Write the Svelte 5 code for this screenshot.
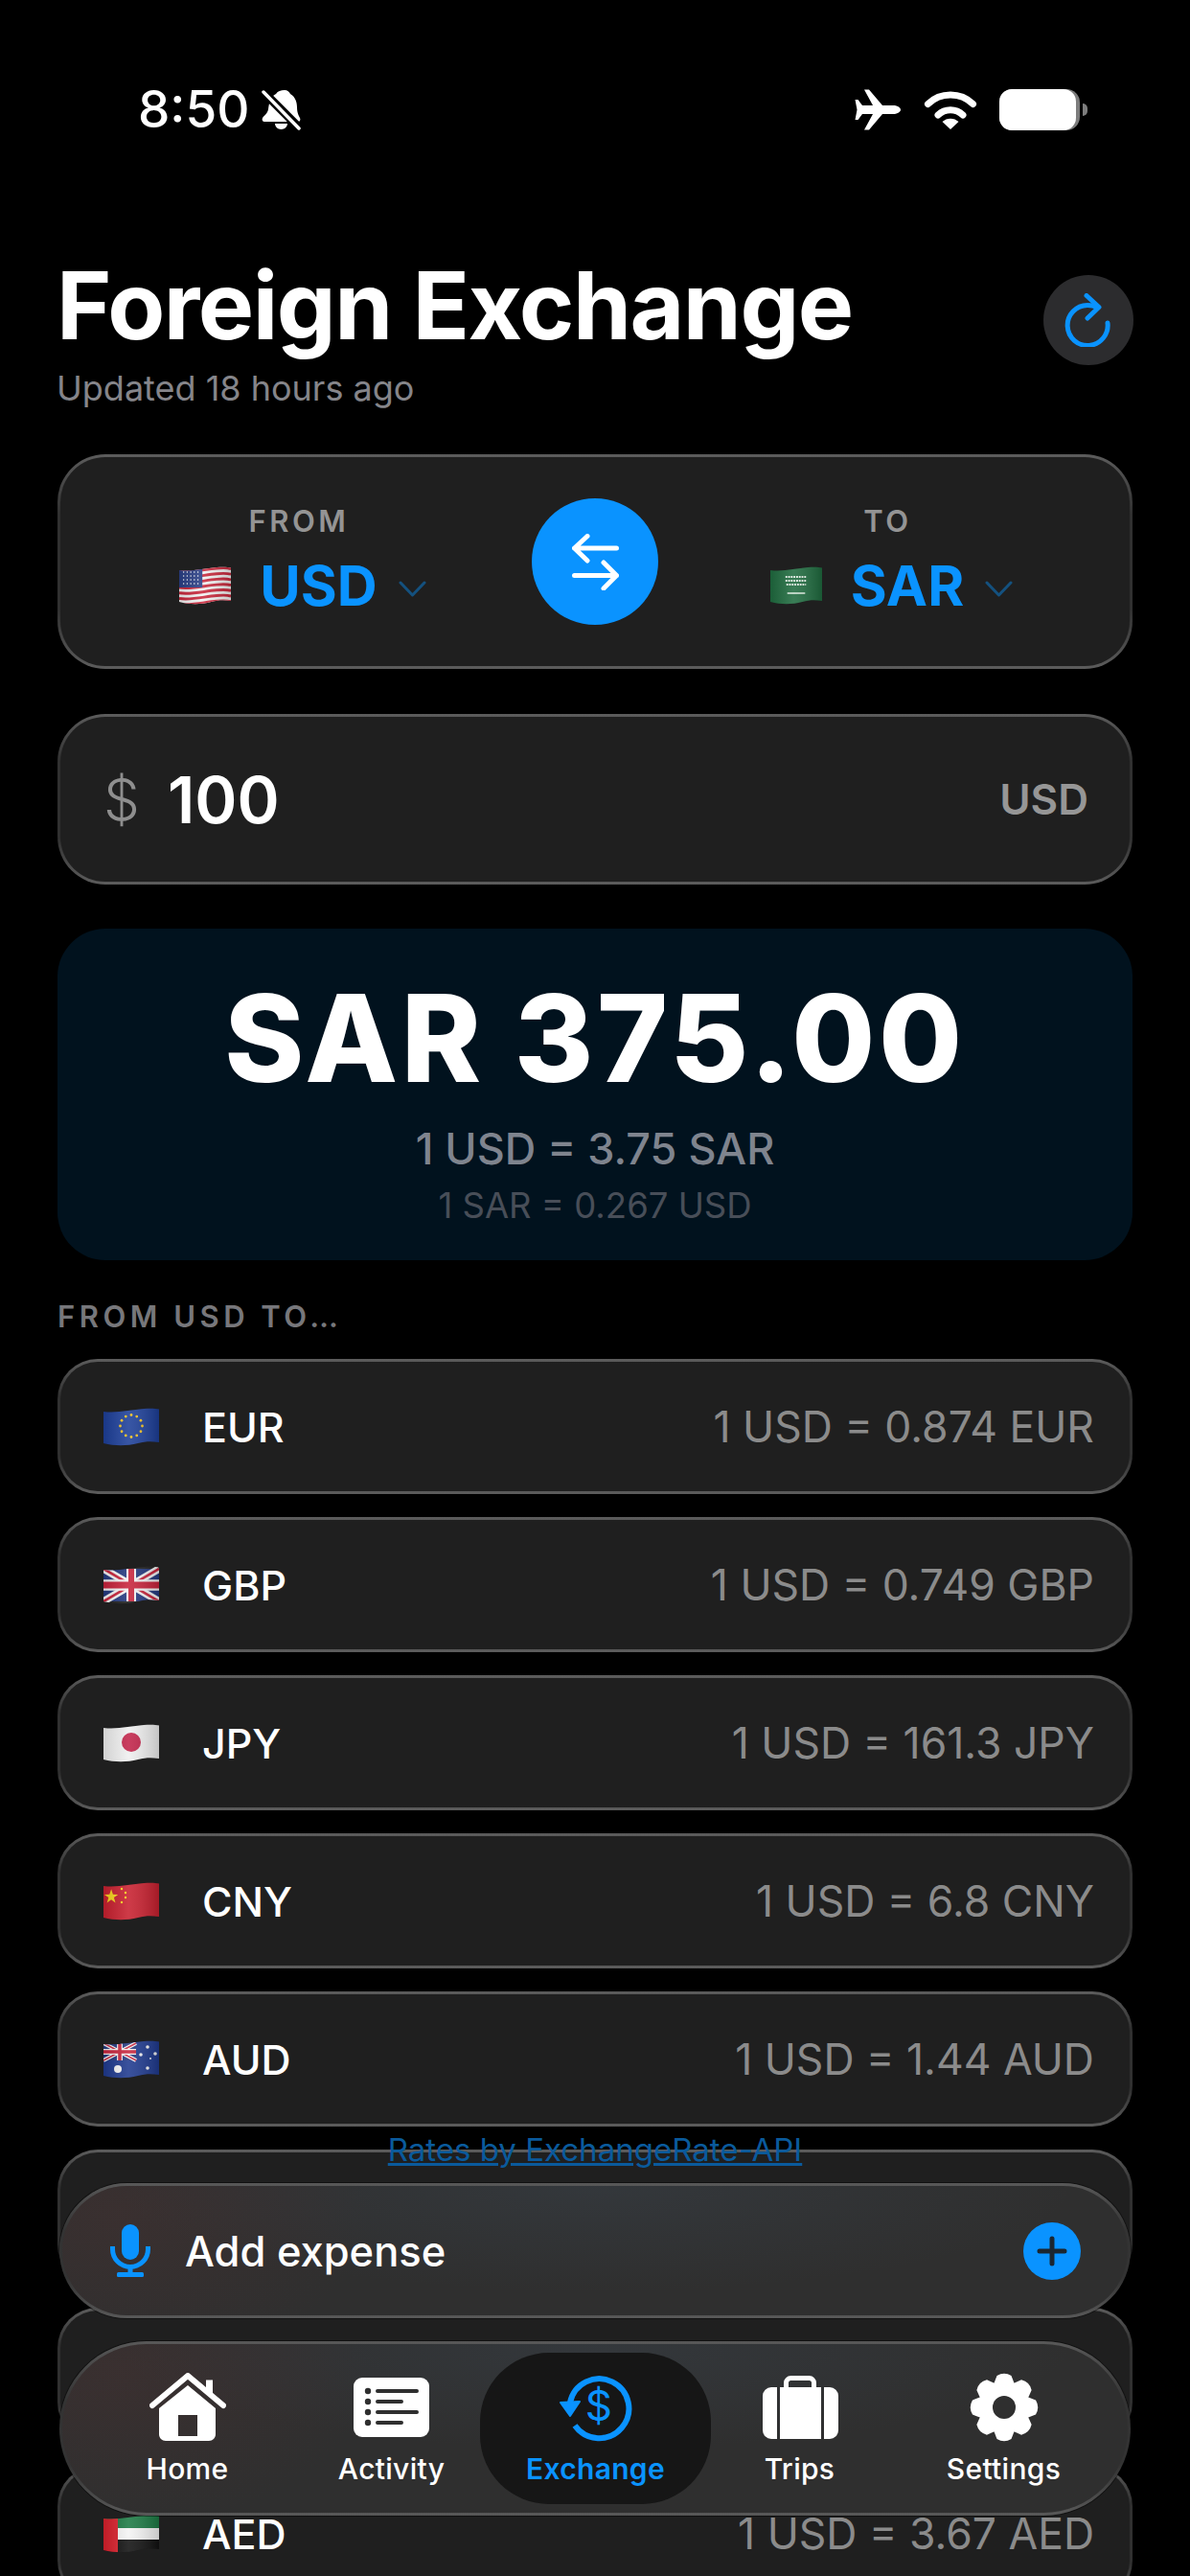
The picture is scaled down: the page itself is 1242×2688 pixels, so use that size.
<script>
  // the two rows behind the floating bars are never visible, so they stay empty
  const rates = [
    { code: 'EUR', rate: '0.874' },
    { code: 'GBP', rate: '0.749' },
    { code: 'JPY', rate: '161.3' },
    { code: 'CNY', rate: '6.8' },
    { code: 'AUD', rate: '1.44' },
    { code: '', rate: '' },
    { code: '', rate: '' },
    { code: 'AED', rate: '3.67' }
  ];

  const waveClip = 'M0 4C14 6 28 2 42 1C48 .5 54 .5 58 1.5V36C50 35 44 35 36 37C24 40 12 40 0 37Z';
  const stars = Array.from({ length: 12 }, (_, i) => ({
    x: 29 + 11.5 * Math.sin((i * Math.PI) / 6),
    y: 19 - 11.5 * Math.cos((i * Math.PI) / 6)
  }));
  const stripes = Array.from({ length: 7 }, (_, i) => 2.5 + i * 5.7);
  const teeth = [0, 45, 90, 135, 180, 225, 270, 315];
</script>

{#snippet jack(w, h)}
  <g transform="scale({w / 58} {h / 30})">
    <rect width="58" height="30" fill="#24397f" />
    <path d="M0 0L58 30M58 0L0 30" stroke="#f4f4f4" stroke-width="7" />
    <path d="M0 0L58 30M58 0L0 30" stroke="#c8243c" stroke-width="2.5" />
    <path d="M29 0V30M0 15H58" stroke="#f4f4f4" stroke-width="10" />
    <path d="M29 0V30M0 15H58" stroke="#c8243c" stroke-width="6" />
  </g>
{/snippet}

{#snippet flag(code)}
  <svg class="flag" viewBox="0 0 58 40" preserveAspectRatio="none" aria-hidden="true">
    <defs>
      <clipPath id="wave-{code}"><path d={waveClip} /></clipPath>
      <linearGradient id="sheen-{code}" x1="0" x2="1" y1="0" y2="0">
        <stop offset="0" stop-color="#000" stop-opacity=".12" />
        <stop offset=".45" stop-color="#fff" stop-opacity=".12" />
        <stop offset="1" stop-color="#000" stop-opacity=".18" />
      </linearGradient>
    </defs>
    <g clip-path="url(#wave-{code})">
      {#if code === 'USD'}
        <rect width="58" height="40" fill="#f2f2f2" />
        {#each stripes as y}
          <path d="M0 {y + 2.5}C14 {y + 4.5} 28 {y + .5} 42 {y - .5}C48 {y - 1} 54 {y - 1} 58 {y}" fill="none" stroke="#c9283c" stroke-width="2.9" />
        {/each}
        <rect y="0" width="26" height="22" fill="#2a3f86" />
        {#each [5, 9, 13, 17, 21] as x}
          {#each [6, 10, 14, 18] as y}
            <circle cx={x} cy={y} r=".8" fill="#fff" />
          {/each}
        {/each}
      {:else if code === 'SAR'}
        <rect width="58" height="40" fill="#1f6b3f" />
        <path d="M17 11h24M17 15h24M18 19h22" stroke="#e4efe6" stroke-width="2" stroke-dasharray="2 1" />
        <path d="M19 28H39" stroke="#e4efe6" stroke-width="1.4" />
      {:else if code === 'EUR'}
        <rect width="58" height="40" fill="#1d3f99" />
        {#each stars as s}
          <circle cx={s.x} cy={s.y} r="1.4" fill="#f2c21f" />
        {/each}
      {:else if code === 'GBP'}
        <g transform="translate(0 3)">{@render jack(58, 34)}</g>
      {:else if code === 'JPY'}
        <rect width="58" height="40" fill="#efefef" />
        <circle cx="29" cy="19" r="10" fill="#c2244a" />
      {:else if code === 'CNY'}
        <rect width="58" height="40" fill="#c8202f" />
        <path d="M9 7l2 6 6 .2-4.900 3.600 1.800 6-4.900-3.600-4.900 3.600 1.800-6L1 13.200 7 13z" fill="#f7d51d" transform="translate(0 1) scale(.9)" />
        <circle cx="19" cy="7" r="1.200" fill="#f7d51d" />
        <circle cx="23" cy="11" r="1.200" fill="#f7d51d" />
        <circle cx="23" cy="16" r="1.200" fill="#f7d51d" />
        <circle cx="19" cy="21" r="1.200" fill="#f7d51d" />
      {:else if code === 'AUD'}
        <rect width="58" height="40" fill="#1f3a8f" />
        <g transform="translate(0 3)">{@render jack(34, 18)}</g>
        <circle cx="15" cy="30" r="4" fill="#f4f4f4" />
        <circle cx="46" cy="7" r="1.800" fill="#f4f4f4" />
        <circle cx="39" cy="15" r="1.800" fill="#f4f4f4" />
        <circle cx="54" cy="14" r="1.800" fill="#f4f4f4" />
        <circle cx="49" cy="19" r="1" fill="#f4f4f4" />
        <circle cx="46" cy="29" r="1.800" fill="#f4f4f4" />
      {:else if code === 'AED'}
        <rect width="58" height="14" fill="#1c7a44" />
        <rect y="14" width="58" height="12" fill="#f4f4f4" />
        <rect y="26" width="58" height="14" fill="#111" />
        <rect width="15" height="40" fill="#d9202c" />
      {/if}
      <rect width="58" height="40" fill="url(#sheen-{code})" />
    </g>
  </svg>
{/snippet}

{#snippet chevron()}
  <svg class="chevron" viewBox="0 0 29 17" aria-hidden="true">
    <path d="M2 2L14.500 15L27 2" />
  </svg>
{/snippet}

<div class="page">
  <div class="status">
    <div class="status-left">
      <span class="time">8:50</span>
      <svg class="bell" viewBox="0 0 42 43" aria-hidden="true">
        <path fill="#fff" d="M25 1c3 0 5 2 6 4 5 3 7 8 7 14 0 6 2 9 3 11 1 2 0 4-2 4H4c-2 0-3-2-2-4 2-3 5-4 6-9 1-7 2-13 8-16 2-3 5-4 9-4zM15 36h13c0 3-3 6-6.500 6S15 39 15 36z" />
        <path d="M-1 -1L42 42" stroke="#000" stroke-width="9" />
        <path d="M3 3L40 41" stroke="#fff" stroke-width="3.500" stroke-linecap="round" />
      </svg>
    </div>
    <div class="status-right">
      <svg class="plane" viewBox="0 0 48 43" aria-hidden="true">
        <path fill="#fff" d="M48 21.500C48 19 44 17 40 17H29L15 .5H10L19 17H8L3.500 11H.5L2.500 21.500.5 32H3.500L8 26H19L10 42.500H15L29 26H40C44 26 48 24 48 21.500Z" />
      </svg>
      <svg class="wifi" viewBox="0 0 56 41" aria-hidden="true">
        <path d="M4.500 14.500A34 34 0 0 1 51.500 14.500" />
        <path d="M15 26A18.500 18.500 0 0 1 41 26" />
        <path class="wedge" d="M19.500 33A12.500 12.500 0 0 1 36.500 33L28 41Z" />
      </svg>
      <div class="battery"><div class="battery-fill"></div><div class="battery-nub"></div></div>
    </div>
  </div>

  <main class="content">
    <header class="header">
      <div>
        <h1>Foreign Exchange</h1>
        <p class="updated">Updated 18 hours ago</p>
      </div>
      <button class="refresh" aria-label="Refresh">
        <svg viewBox="0 0 50 56" aria-hidden="true">
          <path d="M45 31A21 21 0 1 1 24 12.500C28 12.500 31 13 34 15" />
          <path d="M23 2.500L36 14.500L24 26" />
        </svg>
      </button>
    </header>

    <section class="card pair">
      <div class="side side-from">
        <span class="side-label">FROM</span>
        <span class="side-value">{@render flag('USD')}<b>USD</b>{@render chevron()}</span>
      </div>
      <button class="swap" aria-label="Swap currencies">
        <svg viewBox="0 0 49 59" aria-hidden="true">
          <path d="M2.500 15H46.500M16 2.500L2.500 15L16 28" />
          <path d="M2.500 43.500H46.500M33 30L46.500 43.500L33 57" />
        </svg>
      </button>
      <div class="side side-to">
        <span class="side-label">TO</span>
        <span class="side-value">{@render flag('SAR')}<b>SAR</b>{@render chevron()}</span>
      </div>
    </section>

    <section class="card amount">
      <span class="symbol">$</span>
      <span class="figure">100</span>
      <span class="unit">USD</span>
    </section>

    <section class="result">
      <div class="total">SAR 375.00</div>
      <div class="rate">1 USD = 3.75 SAR</div>
      <div class="inverse">1 SAR = 0.267 USD</div>
    </section>

    <h2 class="list-title">FROM USD TO…</h2>
    <div class="list">
      {#each rates as r}
        <div class="card row">
          {#if r.code}
            {@render flag(r.code)}
            <span class="row-code">{r.code}</span>
            <span class="row-rate">1 USD = {r.rate} {r.code}</span>
          {/if}
        </div>
      {/each}
    </div>
  </main>

  <div class="dock">
    <a class="credit" href="#rates">Rates by ExchangeRate-API</a>

    <div class="glass add">
      <svg class="mic" viewBox="0 0 42 55" aria-hidden="true">
        <rect x="12" width="18" height="37" rx="9" class="solid" />
        <path d="M2.500 23V26A18.500 18.500 0 0 0 39.500 26V23M21 45V52" />
        <rect x="7" y="50" width="28" height="5" rx="1.500" class="solid" />
      </svg>
      <span class="add-text">Add expense</span>
      <span class="plus" aria-hidden="true">
        <svg viewBox="0 0 60 60"><path d="M30 17V43M17 30H43" /></svg>
      </span>
    </div>

    <nav class="glass tabs">
      <div class="tab">
        <svg class="icon" viewBox="0 0 80 72" aria-hidden="true">
          <path fill="#fff" d="M59 7.500h7v19l-7-6.500z" />
          <path fill="none" stroke="#fff" stroke-width="6" stroke-linecap="round" stroke-linejoin="round" d="M3 34L40 3L77 34" />
          <path fill="#fff" fill-rule="evenodd" d="M40 13L69 37V64c0 4-3 7-7 7H17c-4 0-7-3-7-7V37zM30 44V66H50V44z" />
        </svg>
        <span>Home</span>
      </div>
      <div class="tab">
        <svg class="icon" viewBox="0 0 79 72" aria-hidden="true">
          <rect y="5" width="79" height="62" rx="9" fill="#fff" />
          <g fill="#2f2f2f">
            <circle cx="15" cy="19" r="3.200" />
            <circle cx="15" cy="30" r="3.200" />
            <circle cx="15" cy="41" r="3.200" />
            <circle cx="15" cy="52" r="3.200" />
          </g>
          <path fill="none" stroke="#2f2f2f" stroke-width="4" stroke-linecap="round" d="M25 19H66M25 30H50M25 41H66M25 52H50" />
        </svg>
        <span>Activity</span>
      </div>
      <div class="tab active">
        <svg class="icon" viewBox="0 0 76 72" aria-hidden="true">
          <path fill="none" stroke="#0a93ff" stroke-width="6" d="M11 31A31 31 0 1 1 16 55" />
          <path fill="#0a93ff" stroke="#0a93ff" stroke-width="2" stroke-linejoin="round" d="M1 31L21 30L11 45Z" />
          <text x="41" y="50" text-anchor="middle" class="dollar">$</text>
        </svg>
        <span>Exchange</span>
      </div>
      <div class="tab">
        <svg class="icon" viewBox="0 0 80 72" aria-hidden="true">
          <path fill="none" stroke="#fff" stroke-width="5" d="M25.500 18V10.500a5 5 0 0 1 5-5h19a5 5 0 0 1 5 5V18" />
          <path fill="#fff" d="M16 15V69H10a9 9 0 0 1-9-9V24a9 9 0 0 1 9-9ZM19 15H62V69H19ZM65 15h6a9 9 0 0 1 9 9V60a9 9 0 0 1-9 9H65Z" />
        </svg>
        <span>Trips</span>
      </div>
      <div class="tab">
        <svg class="icon" viewBox="-37 -36 74 72" aria-hidden="true">
          <circle r="27" fill="#fff" />
          {#each teeth as a}
            <path fill="#fff" transform="rotate({a})" d="M-11 -24L-7.500 -33Q0 -37.500 7.500 -33L11 -24Z" />
          {/each}
          <circle r="12" fill="#2f2f2f" />
        </svg>
        <span>Settings</span>
      </div>
    </nav>
  </div>
</div>

<style>
  :global(body) {
    margin: 0;
    background: #000;
  }

  .page {
    position: relative;
    height: 2688px;
    overflow: hidden;
    background: #000;
    color: #fff;
    font-family: Inter, "Liberation Sans", sans-serif;
  }

  * {
    box-sizing: border-box;
  }

  /* status bar */
  .status {
    display: flex;
    justify-content: space-between;
    align-items: center;
    height: 138px;
    padding: 90px 107px 0 144px;
  }

  .status-left,
  .status-right {
    display: flex;
    align-items: center;
  }

  .time {
    font-size: 53px;
    font-weight: 500;
    line-height: 48px;
  }

  .bell {
    width: 42px;
    height: 43px;
    margin-left: 12px;
  }

  .plane {
    width: 48px;
    height: 43px;
  }

  .wifi {
    width: 56px;
    height: 41px;
    margin-left: 24px;
  }

  .wifi path {
    fill: none;
    stroke: #fff;
    stroke-width: 7;
    stroke-linecap: round;
  }

  .wifi .wedge {
    fill: #fff;
    stroke: none;
  }

  .battery {
    position: relative;
    width: 84px;
    height: 43px;
    margin-left: 23px;
    border-radius: 14px;
    background: #7d7d7d;
    margin-right: 8px;
  }

  .battery-fill {
    width: 80px;
    height: 43px;
    border-radius: 13px;
    background: #fff;
  }

  .battery-nub {
    position: absolute;
    right: -8px;
    top: 15px;
    width: 5px;
    height: 13px;
    border-radius: 0 5px 5px 0;
    background: #7d7d7d;
  }

  /* main column */
  .content {
    display: flex;
    flex-direction: column;
    padding: 0 60px;
  }

  .header {
    display: flex;
    justify-content: space-between;
    align-items: flex-start;
    margin-top: 121px;
  }

  h1 {
    margin: 0 0 0 -1px;
    font-size: 98px;
    font-weight: 700;
    line-height: 120px;
    letter-spacing: -1.5px;
  }

  .updated {
    margin: 4px 0 0 -1px;
    font-size: 36px;
    line-height: 44px;
    color: #85858a;
  }

  .refresh {
    display: flex;
    align-items: center;
    justify-content: center;
    width: 94px;
    height: 94px;
    margin: 28px -1px 0 0;
    padding: 0;
    border: 0;
    border-radius: 50%;
    background: #2c2c2e;
  }

  .refresh svg {
    width: 50px;
    height: 56px;
    fill: none;
    stroke: #0a93ff;
    stroke-width: 5;
    stroke-linecap: round;
    stroke-linejoin: round;
  }

  .card {
    border: 3px solid transparent;
    background:
      linear-gradient(#1f1f1f, #1f1f1f) padding-box,
      linear-gradient(#5c5c5c, #303030 28%, #303030 72%, #5c5c5c) border-box;
  }

  .pair {
    display: grid;
    grid-template-columns: 1fr auto 1fr;
    align-items: center;
    height: 224px;
    margin-top: 47px;
    border-radius: 50px;
  }

  .side {
    display: flex;
    flex-direction: column;
    align-items: center;
    gap: 12px;
  }

  .side-from {
    padding-left: 14px;
  }

  .side-to {
    padding-right: 5px;
  }

  .side-label {
    padding-right: 8px;
    font-size: 31px;
    font-weight: 600;
    line-height: 38px;
    letter-spacing: 3.5px;
    color: #949494;
  }

  .side-value {
    display: flex;
    align-items: center;
    height: 72px;
    color: #0a93ff;
  }

  .side-value b {
    margin: 0 22px 0 30px;
    font-size: 58px;
    font-weight: 700;
    line-height: 72px;
  }

  .side-value .flag {
    width: 54px;
    height: 40px;
  }

  .chevron {
    width: 29px;
    height: 17px;
    margin-top: 6px;
    fill: none;
    stroke: #14517f;
    stroke-width: 3;
    stroke-linecap: round;
    stroke-linejoin: round;
  }

  .swap {
    display: flex;
    align-items: center;
    justify-content: center;
    width: 132px;
    height: 132px;
    padding: 0;
    border: 0;
    border-radius: 50%;
    background: #0a93ff;
  }

  .swap svg {
    width: 49px;
    height: 59px;
    fill: none;
    stroke: #fff;
    stroke-width: 5;
    stroke-linecap: round;
    stroke-linejoin: round;
  }

  .amount {
    display: flex;
    align-items: center;
    height: 178px;
    margin-top: 47px;
    padding: 0 43px 0 45px;
    border-radius: 50px;
  }

  .symbol {
    width: 67px;
    font-size: 60px;
    font-weight: 300;
    color: #8e8e8e;
  }

  .figure {
    flex: 1;
    font-size: 67px;
    font-weight: 600;
  }

  .unit {
    font-size: 44px;
    font-weight: 600;
    color: #969696;
  }

  .result {
    display: flex;
    flex-direction: column;
    align-items: center;
    height: 346px;
    margin-top: 46px;
    padding-top: 44px;
    border-radius: 50px;
    background: #01121e;
  }

  .total {
    font-size: 126px;
    font-weight: 800;
    line-height: 140px;
    letter-spacing: 3.5px;
  }

  .rate {
    margin-top: 20px;
    font-size: 45px;
    font-weight: 500;
    line-height: 52px;
    color: #7f848e;
  }

  .inverse {
    margin-top: 13px;
    font-size: 36.500px;
    line-height: 40px;
    color: #484e58;
  }

  .list-title {
    margin: 41px 0 26px;
    font-size: 31px;
    font-weight: 600;
    line-height: 36px;
    letter-spacing: 4.500px;
    color: #77777b;
  }

  .list {
    display: flex;
    flex-direction: column;
    gap: 24px;
  }

  .row {
    display: flex;
    flex: none;
    align-items: center;
    height: 141px;
    padding: 0 37px 0 45px;
    border-radius: 42px;
  }

  .flag {
    flex: none;
    width: 58px;
    height: 40px;
  }

  .row-code {
    margin-left: 45px;
    font-size: 43px;
    font-weight: 500;
  }

  .row-rate {
    margin-left: auto;
    font-size: 44.500px;
    color: #8b8b8b;
  }

  /* floating controls over the list */
  .dock {
    position: absolute;
    top: 2223px;
    left: 62px;
    right: 62px;
    display: flex;
    flex-direction: column;
    align-items: center;
  }

  .credit {
    font-size: 33px;
    line-height: 40px;
    color: #0a5a9c;
    text-decoration: underline;
  }

  .glass {
    width: 100%;
    border: 3px solid transparent;
    background:
      radial-gradient(ellipse 260px 160px at 60px 30px, rgba(90, 50, 50, 0.25), transparent) padding-box,
      radial-gradient(ellipse 500px 110px at 50% 0, rgba(70, 90, 110, 0.2), transparent) padding-box,
      linear-gradient(#2f2f2f, #2f2f2f) padding-box,
      linear-gradient(#585858, #333 35%, #333 70%, #585858) border-box;
    box-shadow: 0 0 0 1px rgba(0, 0, 0, 0.45);
  }

  .add {
    display: flex;
    align-items: center;
    height: 141px;
    margin-top: 15px;
    padding: 0 49px 0 50px;
    border-radius: 71px;
  }

  .mic {
    width: 42px;
    height: 55px;
    fill: none;
    stroke: #0a93ff;
    stroke-width: 5;
  }

  .mic .solid {
    fill: #0a93ff;
    stroke: none;
  }

  .add-text {
    margin-left: 36px;
    font-size: 43.500px;
    font-weight: 500;
  }

  .plus {
    display: flex;
    width: 60px;
    height: 60px;
    margin-left: auto;
    border-radius: 50%;
    background: #0a93ff;
  }

  .plus svg {
    fill: none;
    stroke: #1b2630;
    stroke-width: 5;
    stroke-linecap: round;
  }

  .tabs {
    display: grid;
    grid-template-columns: repeat(5, 213px);
    height: 182px;
    margin-top: 24px;
    padding: 9px 0 0 24px;
    border-radius: 91px;
  }

  .tab {
    position: relative;
    display: flex;
    flex-direction: column;
    align-items: center;
    height: 158px;
    padding-top: 21px;
    font-size: 30px;
    line-height: 36px;
    letter-spacing: 0.3px;
    font-weight: 500;
  }

  .tab.active {
    color: #0a93ff;
    font-weight: 600;
  }

  .tab.active::before {
    content: "";
    position: absolute;
    inset: 0 -14px;
    border-radius: 72px;
    background: #161616;
  }

  .tab .icon,
  .tab span {
    position: relative;
  }

  .icon {
    height: 72px;
    margin-bottom: 10px;
  }

  .dollar {
    font-family: Inter, sans-serif;
    font-size: 44px;
    font-weight: 400;
    fill: #0a93ff;
  }
</style>
